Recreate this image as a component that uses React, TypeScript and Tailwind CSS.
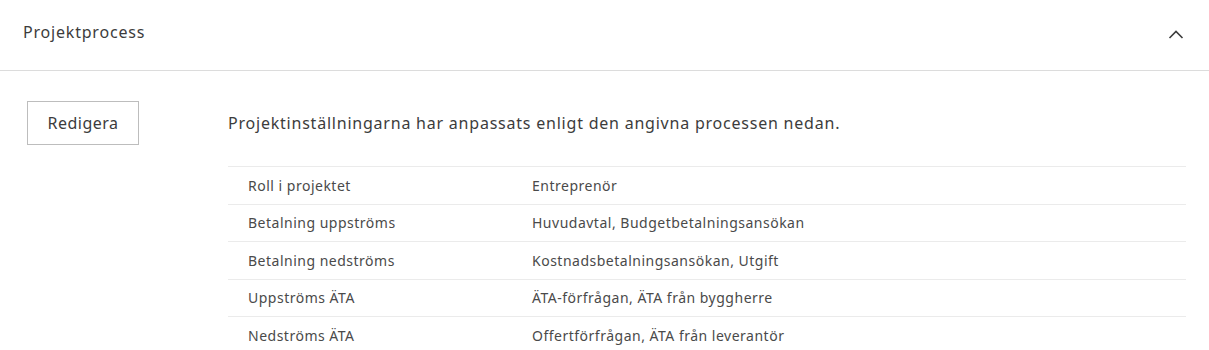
import React from 'react';

const rows: [string, string][] = [
  ['Roll i projektet', 'Entreprenör'],
  ['Betalning uppströms', 'Huvudavtal, Budgetbetalningsansökan'],
  ['Betalning nedströms', 'Kostnadsbetalningsansökan, Utgift'],
  ['Uppströms ÄTA', 'ÄTA-förfrågan, ÄTA från byggherre'],
  ['Nedströms ÄTA', 'Offertförfrågan, ÄTA från leverantör'],
];

export default function App() {
  return (
    <div className="w-[1209px] h-[350px] overflow-hidden bg-white text-[#3c3c3c] font-['Noto_Sans',sans-serif]">
      {/* Header */}
      <div className="h-[71px] flex items-center justify-between pl-[23px] pr-[25px] border-b border-[#dcdcdc]">
        <span className="text-[16px] leading-none tracking-[0.8px] mb-[6px]">Projektprocess</span>
        <svg width="16" height="16" viewBox="0 0 16 16" fill="none">
          <path d="M1.5 11L8 4.5L14.5 11" stroke="#3c3c3c" strokeWidth="1.6" />
        </svg>
      </div>

      {/* Body */}
      <div className="flex pt-[30px]">
        <div className="w-[228px] shrink-0 pl-[27px]">
          <button className="w-[112px] h-[44px] border border-[#bdbdbd] text-[16px] tracking-[0.5px] text-[#3c3c3c] bg-white">
            Redigera
          </button>
        </div>
        <div className="flex-1 pr-[23px]">
          <div className="h-[44px] flex items-center text-[16px] tracking-[0.78px]">
            Projektinställningarna har anpassats enligt den angivna processen nedan.
          </div>
          <div className="mt-[21px] border-t border-[#ebebeb]">
            {rows.map(([label, value]) => (
              <div key={label} className="flex h-[37.5px] items-center border-b border-[#ebebeb] text-[14px] tracking-[0.5px] text-[#4a4a4a]">
                <div className="w-[304px] pl-[20px]">{label}</div>
                <div>{value}</div>
              </div>
            ))}
          </div>
        </div>
      </div>
    </div>
  );
}
